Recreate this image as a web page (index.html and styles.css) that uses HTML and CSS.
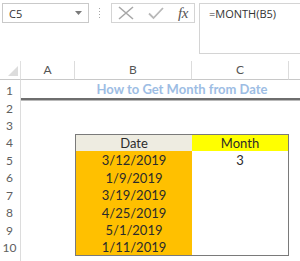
FILE: index.html
```html
<!DOCTYPE html>
<html lang="en">
<head>
  <meta charset="UTF-8" />
  <title>How to Get Month from Date</title>
  <link rel="stylesheet" href="styles.css">
</head>
<body>

  <!-- thanh công thức -->
  <div class="ribbon">
    <div class="namebox">
      <span>C5</span>
      <svg class="drop" width="7" height="4" viewBox="0 0 7 4"><path d="M0 0 H7 L3.5 4 Z" fill="#7a7a7a"/></svg>
    </div>
    <svg class="grip" width="3" height="11" viewBox="0 0 3 11">
      <rect x="1" y="0" width="1" height="1" fill="#a6a6a6"/>
      <rect x="1" y="3" width="1" height="1" fill="#a6a6a6"/>
      <rect x="1" y="6" width="1" height="1" fill="#a6a6a6"/>
      <rect x="1" y="9" width="1" height="1" fill="#a6a6a6"/>
    </svg>
    <div class="fbtns">
      <svg width="16" height="14" viewBox="0 0 16 14"><path d="M1 1 L15 13 M15 1 L1 13" stroke="#a8a8a8" stroke-width="1.6" fill="none"/></svg>
      <svg width="16" height="14" viewBox="0 0 16 14"><path d="M1 7.5 L5.5 12 L15 2" stroke="#b8b8b8" stroke-width="1.8" fill="none"/></svg>
      <span class="fx">fx</span>
    </div>
    <div class="formula">=MONTH(B5)</div>
  </div>

  <!-- bảng tính -->
  <div class="sheet">
    <div class="corner"><svg width="10" height="10" viewBox="0 0 10 10"><path d="M10 0 V10 H0 Z" fill="#dcdcdc"/></svg></div>
    <div class="colhead">A</div>
    <div class="colhead">B</div>
    <div class="colhead">C</div>
    <div class="colhead last"></div>

    <div class="rowhead">1</div>
    <div class="title-row">
      <div class="title">How to Get Month from Date</div>
    </div>

    <div class="rowhead">2</div>
    <div class="rowhead">3</div>
    <div class="rowhead">4</div>
    <div class="rowhead">5</div>
    <div class="rowhead">6</div>
    <div class="rowhead">7</div>
    <div class="rowhead">8</div>
    <div class="rowhead">9</div>
    <div class="rowhead">10</div>
    <div class="rowhead"></div>

    <div class="data">
      <div class="th date">Date</div>
      <div class="th month">Month</div>
      <div class="d">3/12/2019</div><div class="m">3</div>
      <div class="d">1/9/2019</div><div class="m"></div>
      <div class="d">3/19/2019</div><div class="m"></div>
      <div class="d">4/25/2019</div><div class="m"></div>
      <div class="d">5/1/2019</div><div class="m"></div>
      <div class="d">1/11/2019</div><div class="m"></div>
    </div>
  </div>

</body>
</html>
```

FILE: styles.css
```css
* {
  margin: 0;
  padding: 0;
  box-sizing: border-box;
}

body {
  width: 300px;
  background: #fff;
  font-family: 'Open Sans', sans-serif;
  color: #333;
}

/* Thanh công thức */
.ribbon {
  height: 61px;
  display: flex;
  align-items: flex-start;
  padding: 3px 0 0 2px;
}

.namebox {
  width: 87px;
  height: 20px;
  border: 1px solid #c9c9c9;
  display: flex;
  align-items: center;
  justify-content: space-between;
  padding: 0 6px 0 6px;
  font-size: 11px;
  color: #333;
}

.grip {
  margin: 5px 0 0 9px;
}

.fbtns {
  margin-left: 10px;
  width: 84px;
  height: 20px;
  border: 1px solid #d4d4d4;
  display: flex;
  align-items: center;
  gap: 14px;
  padding-left: 6px;
}

.fx {
  font-family: 'Liberation Serif', serif;
  font-style: italic;
  font-size: 15px;
  color: #555;
  letter-spacing: -0.5px;
  line-height: 1;
}

.formula {
  margin-left: 4px;
  flex: 1;
  height: 51px;
  border: 1px solid #d4d4d4;
  border-right: none;
  padding: 2px 0 0 9px;
  font-size: 11px;
  color: #333;
}

/* Lưới bảng tính */
.sheet {
  display: grid;
  grid-template-columns: 21px 54px 117px 97px 11px;
  grid-template-rows: 19px 20px 17px 17px 17px 18px 17px 18px 17px 18px 17px 5px;
  font-family: 'Lato', sans-serif;
}

.corner {
  display: flex;
  align-items: flex-end;
  justify-content: flex-end;
  padding: 0 2px 3px 0;
  border-bottom: 1px solid #c8c8c8;
  border-right: 1px solid #e0e0e0;
}

.colhead {
  font-size: 12px;
  color: #555;
  text-align: center;
  line-height: 18px;
  border-bottom: 1px solid #c8c8c8;
  border-right: 1px solid #dcdcdc;
}

.colhead.last {
  border-right: none;
}

.rowhead {
  grid-column: 1;
  font-size: 12px;
  color: #606060;
  padding-right: 1px;
  display: flex;
  align-items: center;
  justify-content: center;
  border-right: 1px solid #dcdcdc;
}

.title-row {
  grid-column: 2 / 6;
  border-bottom: 2px solid #6e6e6e;
  box-shadow: 0 1px 0 #b9b9b9;
}

.title {
  width: 214px;
  margin-left: 54px;
  text-align: center;
  font-weight: bold;
  font-size: 13px;
  line-height: 18px;
  color: #9dbde4;
}

/* Bảng dữ liệu */
.data {
  grid-column: 3 / 5;
  grid-row: 5 / 12;
  width: 214px;
  border: 1px solid #7a7a7a;
  display: grid;
  grid-template-columns: 116px 96px;
  grid-template-rows: 16px 18px 17px 18px 17px 18px 16px;
  font-size: 13px;
  color: #2b2b2b;
  text-align: center;
}

.data div {
  display: flex;
  align-items: center;
  justify-content: center;
}

.th.date {
  background: #eeece1;
}

.th.month {
  background: #ffff00;
}

.d {
  background: #ffc000;
}

.m {
  background: #fff;
}
```
